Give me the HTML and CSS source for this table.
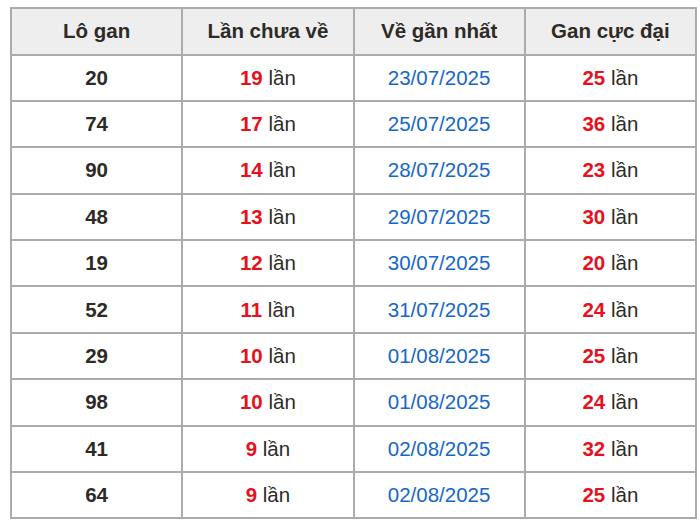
FILE: index.html
```html
<!DOCTYPE html>
<html lang="vi">
<head>
<meta charset="utf-8">
<link rel="stylesheet" href="styles.css">
</head>
<body>
<table class="gan-table">
  <thead>
    <tr><th>Lô gan</th><th>Lần chưa về</th><th>Về gần nhất</th><th>Gan cực đại</th></tr>
  </thead>
  <tbody>
    <tr><td class="num">20</td><td><span class="red">19</span> lần</td><td class="date">23/07/2025</td><td><span class="red">25</span> lần</td></tr>
    <tr><td class="num">74</td><td><span class="red">17</span> lần</td><td class="date">25/07/2025</td><td><span class="red">36</span> lần</td></tr>
    <tr><td class="num">90</td><td><span class="red">14</span> lần</td><td class="date">28/07/2025</td><td><span class="red">23</span> lần</td></tr>
    <tr><td class="num">48</td><td><span class="red">13</span> lần</td><td class="date">29/07/2025</td><td><span class="red">30</span> lần</td></tr>
    <tr><td class="num">19</td><td><span class="red">12</span> lần</td><td class="date">30/07/2025</td><td><span class="red">20</span> lần</td></tr>
    <tr><td class="num">52</td><td><span class="red">11</span> lần</td><td class="date">31/07/2025</td><td><span class="red">24</span> lần</td></tr>
    <tr><td class="num">29</td><td><span class="red">10</span> lần</td><td class="date">01/08/2025</td><td><span class="red">25</span> lần</td></tr>
    <tr><td class="num">98</td><td><span class="red">10</span> lần</td><td class="date">01/08/2025</td><td><span class="red">24</span> lần</td></tr>
    <tr><td class="num">41</td><td><span class="red">9</span> lần</td><td class="date">02/08/2025</td><td><span class="red">32</span> lần</td></tr>
    <tr><td class="num">64</td><td><span class="red">9</span> lần</td><td class="date">02/08/2025</td><td><span class="red">25</span> lần</td></tr>
  </tbody>
</table>
</body>
</html>
```
FILE: styles.css
```css
html, body {
  margin: 0;
  padding: 0;
  background: #fff;
}
body {
  padding: 7px 3px 0 10px;
  font-family: "Liberation Sans", Arial, sans-serif;
  color: #2e2b27;
}
.gan-table {
  width: 687px;
  border-collapse: collapse;
  table-layout: fixed;
  font-size: 20.5px;
}
.gan-table th,
.gan-table td {
  border: 2px solid #ababab;
  text-align: center;
  vertical-align: middle;
  padding: 0;
}
.gan-table thead tr {
  height: 46.5px;
}
.gan-table tbody tr {
  height: 46.4px;
}
.gan-table th {
  background: #eeeeee;
  font-weight: bold;
}
.gan-table .num {
  font-weight: bold;
}
.red {
  color: #e8101c;
  font-weight: bold;
}
.date {
  color: #1667c9;
}
```
